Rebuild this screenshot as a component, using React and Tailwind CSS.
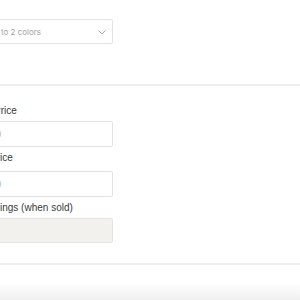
export default function App() {
  const label = "text-[10px] leading-[12px] text-[#3a3a3a] flex whitespace-pre";
  const sans = { fontFamily: '"Liberation Sans", Arial, sans-serif' };
  return (
    <div className="w-[300px] h-[300px] bg-white overflow-hidden flex flex-col" style={sans}>
      <div className="flex flex-col -ml-[88px] w-[388px]">
        {/* color select */}
        <div className="mt-[19px] w-[201px] h-[25px] border border-[#e3e3e3] rounded-[2px] flex items-center justify-between pr-[6px]">
          <div className="ml-[88px] flex whitespace-pre text-[8px] text-[#a3a3a3]" style={{ fontFamily: 'Inter, "Open Sans", sans-serif' }}>
            <span className="w-0 flex justify-end">Choose up </span>
            <span>to 2 colors</span>
          </div>
          <svg width="8" height="5" viewBox="0 0 8 5" className="mt-[2px]">
            <polyline points="0.5,0.5 4,4 7.5,0.5" fill="none" stroke="#a8a8a8" strokeWidth="1" />
          </svg>
        </div>

        <div className="mt-[40px] h-[2px] bg-[#eeeeee]" />

        {/* Price */}
        <div className={`mt-[19px] ml-[92px] ${label}`}>
          <span className="w-0 flex justify-end">Pr</span>
          <span>ice</span>
        </div>
        <div className="mt-[4px] w-[201px] h-[26px] border border-[#e2e2e2] rounded-[2px] flex items-center">
          <div className="ml-[88px] w-0 flex justify-end text-[10px] text-[#b3b3b3]">$0</div>
        </div>

        {/* Sale price */}
        <div className={`mt-[5px] ml-[88px] ${label}`}>
          <span className="w-0 flex justify-end">Sale pr</span>
          <span>ice</span>
        </div>
        <div className="mt-[7px] w-[201px] h-[26px] border border-[#e2e2e2] rounded-[2px] flex items-center">
          <div className="ml-[88px] w-0 flex justify-end text-[10px] text-[#b3b3b3]">$0</div>
        </div>

        {/* Earnings */}
        <div className={`mt-[5px] ml-[88px] ${label}`}>
          <span className="w-0 flex justify-end">Your earn</span>
          <span>ings (when sold)</span>
        </div>
        <div className="mt-[4px] w-[201px] h-[25px] border border-[#e6e3de] bg-[#f3f1ee] rounded-[2px]" />

        <div className="mt-[20px] h-[2px] bg-[#eeeeee]" />
      </div>
      <div className="mt-auto h-[18px] bg-gradient-to-b from-white to-[#f0f0f0]" />
    </div>
  );
}
